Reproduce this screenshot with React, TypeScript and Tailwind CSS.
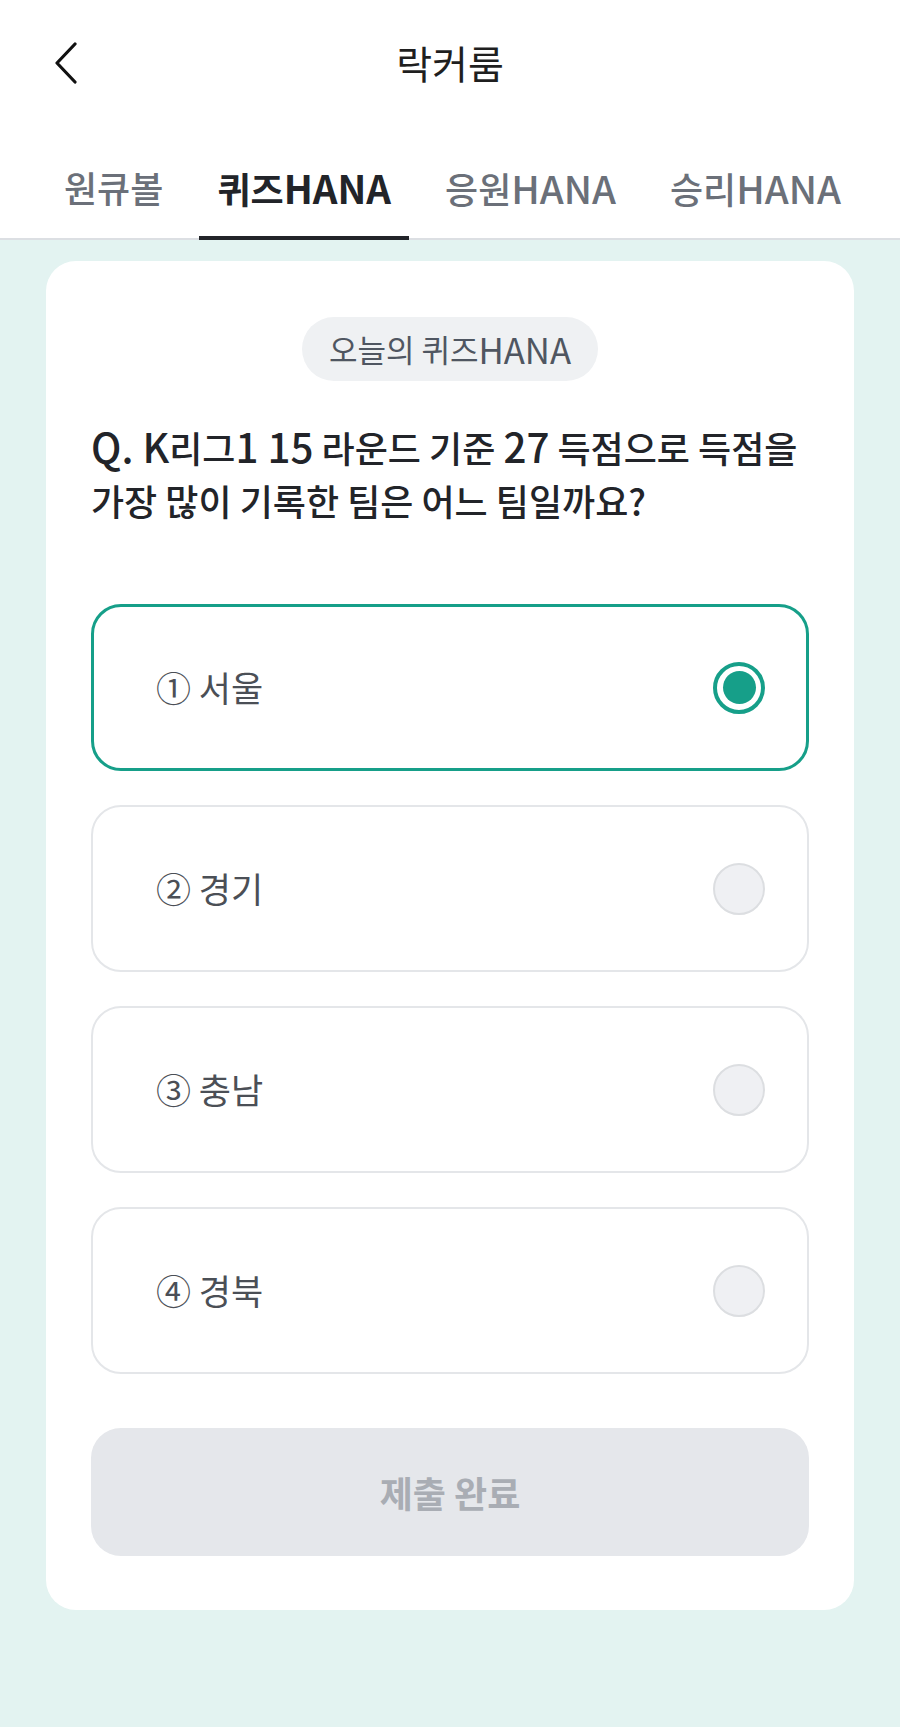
import { useState } from 'react';

const tabs = [
  { ko: '원큐볼', en: '' },
  { ko: '퀴즈', en: 'HANA' },
  { ko: '응원', en: 'HANA' },
  { ko: '승리', en: 'HANA' },
];

const options = [
  { no: '①', label: '서울' },
  { no: '②', label: '경기' },
  { no: '③', label: '충남' },
  { no: '④', label: '경북' },
];

// The app font draws Latin letters larger than Noto does, so bump them a little
function En({ children, small }: { children: React.ReactNode; small?: boolean }) {
  return <span className={small ? 'text-[1.07em]' : 'text-[1.12em]'}>{children}</span>;
}

function BackIcon() {
  return (
    <svg width="24" height="42" viewBox="0 0 24 42" fill="none" aria-hidden="true">
      <polyline points="21,2 3,21 21,40" stroke="#111" strokeWidth="3.2" strokeLinecap="round" strokeLinejoin="round" />
    </svg>
  );
}

export default function App() {
  const [selected, setSelected] = useState(0);

  return (
    <div className="min-h-screen bg-white font-['Noto_Sans_CJK_KR','Noto_Sans',sans-serif]">
      {/* Header */}
      <header className="grid h-[125px] grid-cols-[1fr_auto_1fr] items-center">
        <button className="ml-[54px] flex w-fit items-center" aria-label="뒤로 가기">
          <BackIcon />
        </button>
        <h1 className="text-[39px] font-normal text-[#1f1f1f]">락커룸</h1>
        <div />
      </header>

      {/* Tabs */}
      <nav className="flex gap-[18px] border-b-2 border-[#dcdfe3] pl-[46px]">
        {tabs.map((tab, i) => (
          <div
            key={tab.ko}
            className={
              i === 1
                ? '-mb-[2px] border-b-[4px] border-[#222429] px-[18px] pb-[28px] pt-[42px] text-[36px] font-bold leading-[40px] text-[#222429]'
                : '-mb-[2px] border-b-[4px] border-transparent px-[18px] pb-[28px] pt-[42px] text-[36px] font-medium leading-[40px] text-[#6b7079]'
            }
          >
            {tab.ko}
            {tab.en && <En small>{tab.en}</En>}
          </div>
        ))}
      </nav>

      {/* Quiz */}
      <main className="bg-[#e3f3f1] px-[46px] pb-[117px] pt-[21px]">
        <section className="rounded-[30px] bg-white px-[45px] pb-[54px] pt-[56px]">
          <div className="mx-auto flex h-[64px] w-fit items-center rounded-full bg-[#eff1f3] px-[27px] text-[31px] leading-[40px] text-[#4f5661]">
            오늘의 퀴즈<En>HANA</En>
          </div>

          <p className="mt-[38px] text-[36px] font-medium leading-[53px] text-[#222429]">
            <span className="block whitespace-nowrap">
              <En>Q. K</En>리그<En>1 15</En> 라운드 기준 <En>27</En> 득점으로 득점을
            </span>
            <span className="block whitespace-nowrap">가장 많이 기록한 팀은 어느 팀일까요?</span>
          </p>

          <div className="mt-[77px] flex flex-col gap-[34px]">
            {options.map((opt, i) => (
              <button
                key={opt.label}
                onClick={() => setSelected(i)}
                className={
                  selected === i
                    ? 'flex h-[167px] items-center justify-between rounded-[30px] border-[3px] border-[#169f89] bg-white pl-[62px] pr-[41px] text-left'
                    : 'flex h-[167px] items-center justify-between rounded-[30px] border-2 border-[#e4e6e9] bg-white pl-[63px] pr-[42px] text-left'
                }
              >
                <span className="text-[35px] text-[#4b4f56]">
                  {opt.no} {opt.label}
                </span>
                {selected === i ? (
                  <span className="flex h-[52px] w-[52px] items-center justify-center rounded-full border-[4px] border-[#169f89]">
                    <span className="h-[33px] w-[33px] rounded-full bg-[#169f89]" />
                  </span>
                ) : (
                  <span className="h-[52px] w-[52px] rounded-full border-2 border-[#dcdee1] bg-[#eff0f3]" />
                )}
              </button>
            ))}
          </div>

          <button className="mt-[54px] flex h-[128px] w-full items-center justify-center rounded-[30px] bg-[#e5e7eb] text-[36px] font-semibold text-[#a9adb4]">
            제출 완료
          </button>
        </section>
      </main>
    </div>
  );
}
